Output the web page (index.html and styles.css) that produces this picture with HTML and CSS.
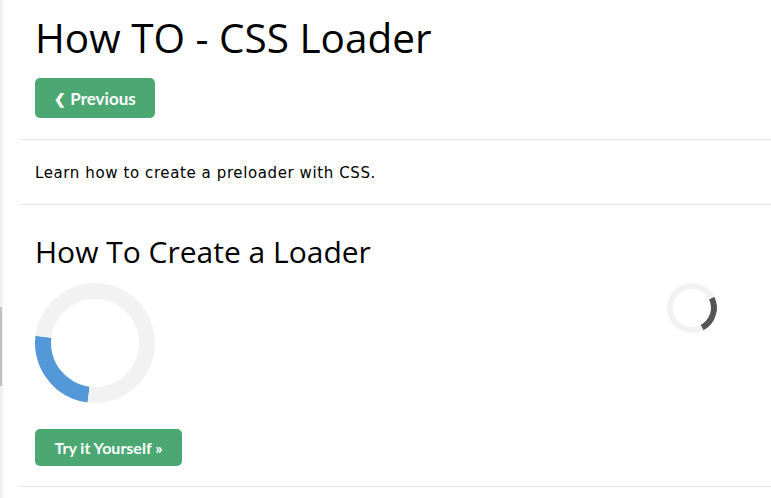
FILE: index.html
```html
<!DOCTYPE html>
<html lang="en">
<head>
<meta charset="utf-8">
<title>How TO - CSS Loader</title>
<link rel="stylesheet" href="styles.css">
</head>
<body>
<div class="page">
  <aside class="sidebar"><div class="thumb"></div></aside>
  <main class="main">
    <section class="block intro">
      <h1 class="title">How TO - CSS Loader</h1>
      <a class="btn btn-prev" href="#"><span class="chev">&#10094;</span> Previous</a>
    </section>
    <hr class="rule">
    <section class="block lead">
      <p class="lead-text">Learn how to create a preloader with CSS.</p>
    </section>
    <hr class="rule">
    <section class="block demo">
      <h2 class="subtitle">How To Create a Loader</h2>
      <div class="loaders">
        <div class="loader loader-big"></div>
        <div class="loader loader-small"></div>
      </div>
      <a class="btn btn-try" href="#">Try it Yourself &raquo;</a>
    </section>
    <hr class="rule">
  </main>
</div>
</body>
</html>
```
FILE: styles.css
```css
html, body {
  margin: 0;
  padding: 0;
  background: #fff;
}
.page {
  display: flex;
  min-height: 498px;
}
.sidebar {
  width: 3px;
  flex: none;
  background: #f1f1f1;
  display: flex;
  flex-direction: column;
}
.thumb {
  margin-top: 307px;
  height: 79px;
  width: 2px;
  background: #c1c1c1;
}
.main {
  flex: 1;
  padding-left: 16px;
  min-width: 0;
}
.block {
  padding: 0 16px;
}
.rule {
  border: 0;
  border-top: 1px solid #e9e9e9;
  margin: 0;
  height: 0;
}
.title {
  font-family: "Open Sans", sans-serif;
  font-weight: 400;
  font-size: 40.5px;
  line-height: 54px;
  margin: 11px 0 0;
  color: #000;
}
.btn {
  display: inline-flex;
  align-items: center;
  justify-content: center;
  background: #4ca873;
  color: #fff;
  text-decoration: none;
  border-radius: 5px;
  font-family: Lato, sans-serif;
  font-weight: 700;
}
.btn-prev {
  width: 120px;
  height: 40px;
  font-size: 17px;
  margin-top: 13px;
  margin-bottom: 21px;
}
.chev {
  font-size: 14px;
  font-weight: 900;
  margin-right: 4px;
}
.lead {
  padding-top: 24px;
  padding-bottom: 21px;
}
.lead-text {
  margin: 0;
  font-family: "DejaVu Sans", Verdana, sans-serif;
  font-size: 15px;
  letter-spacing: 0.6px;
  line-height: 19px;
  color: #000;
}
.subtitle {
  font-family: "Open Sans", sans-serif;
  font-weight: 400;
  font-size: 30px;
  line-height: 40px;
  margin: 27px 0 0;
  color: #000;
}
.loaders {
  display: flex;
  justify-content: space-between;
  align-items: flex-start;
  padding-right: 38px;
  margin-top: 11px;
}
.loader {
  box-sizing: border-box;
  border-radius: 50%;
}
.loader-big {
  width: 120px;
  height: 120px;
  border: 16px solid #f2f2f2;
  border-top-color: #5398d9;
  transform: rotate(232deg);
}
.loader-small {
  width: 50px;
  height: 50px;
  border: 6px solid #f2f2f2;
  border-top-color: #555;
  transform: rotate(108deg);
}
.btn-try {
  width: 147px;
  height: 37px;
  font-size: 16px;
  margin-top: 26px;
  margin-bottom: 20px;
}
```
